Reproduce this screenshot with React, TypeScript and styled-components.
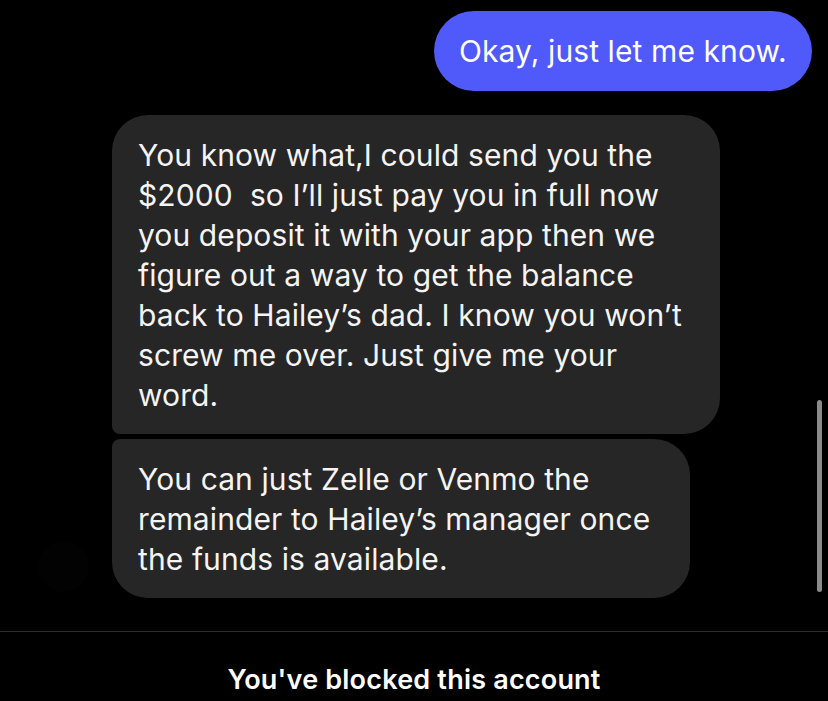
import styled, { createGlobalStyle } from 'styled-components';

const GlobalStyle = createGlobalStyle`
	html, body {
		margin: 0;
		padding: 0;
		background: #000;
	}
	body {
		font-family: 'Inter', 'Roboto', sans-serif;
		-webkit-font-smoothing: antialiased;
	}
`;

const incoming = [
	{
		id: 1,
		width: 608,
		lines: [
			'You know what,I could send you the',
			'$2000  so I’ll just pay you in full now',
			'you deposit it with your app then we',
			'figure out a way to get the balance',
			'back to Hailey’s dad. I know you won’t',
			'screw me over. Just give me your',
			'word.',
		],
	},
	{
		id: 2,
		width: 578,
		lines: ['You can just Zelle or Venmo the', 'remainder to Hailey’s manager once', 'the funds is available.'],
	},
];

function App() {
	return (
		<>
			<GlobalStyle />
			<Screen>
				<Thread>
					<OutRow>
						<OutBubble>Okay, just let me know.</OutBubble>
					</OutRow>
					<InGroup>
						<Avatar />
						<InStack>
							{incoming.map((msg, i) => (
								<InBubble key={msg.id} $width={msg.width} $first={i === 0} $last={i === incoming.length - 1}>
									{msg.lines.map((line) => (
										<Line key={line}>{line}</Line>
									))}
								</InBubble>
							))}
						</InStack>
					</InGroup>
					<ScrollThumb />
				</Thread>
				<Footer>You've blocked this account</Footer>
			</Screen>
		</>
	);
}

const Screen = styled.div`
	width: 828px;
	height: 701px;
	display: flex;
	flex-direction: column;
	background: #000;
	overflow: hidden;
`;

const Thread = styled.div`
	position: relative;
	flex: 1;
	display: flex;
	flex-direction: column;
	gap: 24px;
	padding: 11px 16px 0 0;
`;

const OutRow = styled.div`
	display: flex;
	justify-content: flex-end;
`;

const OutBubble = styled.div`
	width: 378px;
	box-sizing: border-box;
	padding: 20px 0 20px 25px;
	border-radius: 40px;
	background: #5059fa;
	color: #fff;
	font-size: 30px;
	line-height: 40px;
	letter-spacing: 0.1px;
	white-space: nowrap;
`;

const InGroup = styled.div`
	display: flex;
	align-items: flex-end;
	gap: 23px;
	padding-left: 38px;
`;

const Avatar = styled.div`
	flex: 0 0 auto;
	width: 51px;
	height: 51px;
	margin-bottom: 6px;
	border-radius: 50%;
	background: #020202;
`;

const InStack = styled.div`
	display: flex;
	flex-direction: column;
	gap: 5px;
`;

const InBubble = styled.div<{ $width: number; $first: boolean; $last: boolean }>`
	width: ${(p) => p.$width}px;
	box-sizing: border-box;
	padding: 20px 0 19px 26px;
	background: #262626;
	color: #f4f4f4;
	font-size: 30px;
	line-height: 40px;
	letter-spacing: 0.1px;
	border-radius: ${(p) => `${p.$first ? 36 : 8}px 36px 36px ${p.$last ? 36 : 8}px`};
`;

const Line = styled.div`
	white-space: pre;
`;

const ScrollThumb = styled.div`
	position: absolute;
	top: 400px;
	right: 6px;
	width: 5px;
	height: 192px;
	border-radius: 3px;
	background: #8a8a8a;
`;

const Footer = styled.div`
	flex: 0 0 70px;
	display: flex;
	align-items: flex-end;
	justify-content: center;
	padding-bottom: 5px;
	box-sizing: border-box;
	border-top: 1px solid #2c2c2c;
	color: #fff;
	font-size: 27px;
	font-weight: 600;
	letter-spacing: 0.2px;
`;

export default App;
